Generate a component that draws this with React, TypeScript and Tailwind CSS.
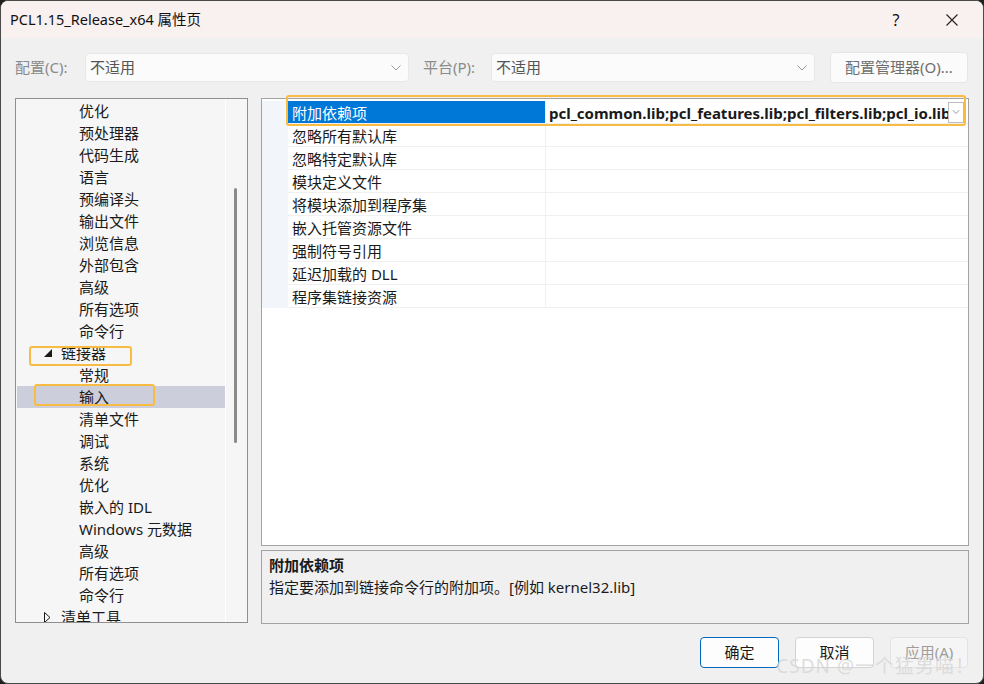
import React from "react";

// Visual Studio project property page: Linker > Input

const treeItems: { label: string; level: 1 | 2; expanded?: boolean; selected?: boolean }[] = [
  { label: "优化", level: 2 },
  { label: "预处理器", level: 2 },
  { label: "代码生成", level: 2 },
  { label: "语言", level: 2 },
  { label: "预编译头", level: 2 },
  { label: "输出文件", level: 2 },
  { label: "浏览信息", level: 2 },
  { label: "外部包含", level: 2 },
  { label: "高级", level: 2 },
  { label: "所有选项", level: 2 },
  { label: "命令行", level: 2 },
  { label: "链接器", level: 1, expanded: true },
  { label: "常规", level: 2 },
  { label: "输入", level: 2, selected: true },
  { label: "清单文件", level: 2 },
  { label: "调试", level: 2 },
  { label: "系统", level: 2 },
  { label: "优化", level: 2 },
  { label: "嵌入的 IDL", level: 2 },
  { label: "Windows 元数据", level: 2 },
  { label: "高级", level: 2 },
  { label: "所有选项", level: 2 },
  { label: "命令行", level: 2 },
  { label: "清单工具", level: 1, expanded: false },
];

const props = [
  "附加依赖项",
  "忽略所有默认库",
  "忽略特定默认库",
  "模块定义文件",
  "将模块添加到程序集",
  "嵌入托管资源文件",
  "强制符号引用",
  "延迟加载的 DLL",
  "程序集链接资源",
];

function Chevron({ className = "" }: { className?: string }) {
  return (
    <svg width="10" height="6" viewBox="0 0 10 6" className={className}>
      <path d="M0.5 0.5 L5 5 L9.5 0.5" fill="none" stroke="currentColor" strokeWidth="1" />
    </svg>
  );
}

function Combo({ value }: { value: string }) {
  return (
    <div className="w-[324px] h-[29px] shrink-0 flex items-center justify-between pl-[4px] pr-[7px] bg-[#fbfbfb] border border-[#e8e8e8] rounded-[4px] text-[#555555]">
      <span>{value}</span>
      <Chevron className="text-[#9a9a9a]" />
    </div>
  );
}

export default function App() {
  return (
    <div className="w-[984px] h-[684px] bg-[#1e1e1e] font-[family-name:'Segoe_UI','Noto_Sans','Noto_Sans_CJK_SC',sans-serif] text-[15px] text-[#1a1a1a]">
      <div className="h-full flex flex-col rounded-[8px] overflow-hidden bg-[#f0f0f0] border border-[#4a4a4a] relative">
        {/* Title bar */}
        <div className="h-[37px] shrink-0 bg-[#f9f0f0] flex items-center pl-[9px] text-[14.5px] text-[#111]">
          <span>PCL1.15_Release_x64 属性页</span>
          <div className="ml-auto flex items-center">
            <span className="w-[20px] text-center text-[16px] mr-[40px]">?</span>
            <svg width="12" height="12" viewBox="0 0 12 12" className="mr-[25px]">
              <path d="M0.5 0.5 L11.5 11.5 M11.5 0.5 L0.5 11.5" stroke="#222" strokeWidth="1.1" />
            </svg>
          </div>
        </div>

        <div className="flex-1 flex flex-col px-[14px]">
          {/* Configuration row */}
          <div className="mt-[14px] h-[31px] flex items-center">
            <span className="w-[70px] shrink-0 whitespace-nowrap text-[#8a8a8a]">配置(C):</span>
            <Combo value="不适用" />
            <span className="ml-[14px] w-[68px] shrink-0 whitespace-nowrap text-[#8a8a8a]">平台(P):</span>
            <Combo value="不适用" />
            <div className="ml-[15px] w-[138px] h-[31px] shrink-0 flex items-center justify-center bg-[#fbfbfb] border border-[#e6e6e6] rounded-[4px] text-[#6e6e6e] whitespace-nowrap">
              配置管理器(O)...
            </div>
          </div>

          {/* Main area */}
          <div className="mt-[15px] flex gap-[13px]">
            {/* Tree */}
            <div className="relative w-[233px] h-[525px] shrink-0 border border-[#8f8f8f] bg-[#f6f6f6] flex overflow-hidden">
              <div className="w-[209px] shrink-0 pt-[1px] pl-[1px]">
                {treeItems.map((it, i) => (
                  <div
                    key={i}
                    className={`h-[22px] flex items-center ${it.selected ? "bg-[#cccedb]" : ""} ${
                      it.level === 2 ? "pl-[62px]" : "pl-[27px]"
                    }`}
                  >
                    {it.level === 1 && (
                      <span className="w-[17px] flex items-center">
                        {it.expanded ? (
                          <svg width="8" height="8" viewBox="0 0 8 8">
                            <path d="M8 0 L8 8 L0 8 Z" fill="#1a1a1a" />
                          </svg>
                        ) : (
                          <svg width="7" height="11" viewBox="0 0 7 11">
                            <path d="M0.5 0.5 L6 5.5 L0.5 10.5 Z" fill="none" stroke="#1a1a1a" strokeWidth="1" />
                          </svg>
                        )}
                      </span>
                    )}
                    <span className="whitespace-nowrap">{it.label}</span>
                  </div>
                ))}
              </div>
              <div className="w-[1px] shrink-0 bg-white" />
              <div className="flex-1 pl-[8px] pt-[89px]">
                <div className="w-[3px] h-[255px] bg-[#8a8a8a] rounded-full" />
              </div>
              {/* annotation boxes */}
              <div className="absolute left-[13px] top-[247px] w-[103px] h-[20px] border-2 border-[#f9bc42] rounded-[3px]" />
              <div className="absolute left-[18px] top-[285px] w-[121px] h-[22px] border-2 border-[#f9bc42] rounded-[3px]" />
            </div>

            {/* Right column */}
            <div className="w-[708px] shrink-0 flex flex-col">
              <div className="relative h-[448px] border border-[#a3a3a3] bg-white">
                <div className="pt-[2px]">
                  {props.map((p, i) => (
                    <div key={p} className="h-[23px] flex overflow-hidden">
                      <div className="w-[26px] shrink-0 bg-[#f2f5fa]" />
                      <div className="flex-1 min-w-0 flex border-b border-[#f0f0f0]">
                        <div
                          className={`w-[258px] shrink-0 pl-[4px] pt-[2px] flex items-center border-r border-[#f0f0f0] whitespace-nowrap ${
                            i === 0 ? "bg-[#0078d7] text-white" : ""
                          }`}
                        >
                          {p}
                        </div>
                        <div className="flex-1 flex items-center min-w-0">
                          {i === 0 && (
                            <>
                              <span className="flex-1 min-w-0 pl-[3px] pt-[2px] font-bold whitespace-nowrap overflow-hidden">
                                pcl_common.lib;pcl_features.lib;pcl_filters.lib;pcl_io.lib;pcl_kdtree.lib
                              </span>
                              <div className="w-[16px] h-[21px] shrink-0 mr-[4px] border border-[#bdbdbd] bg-white flex items-center justify-center">
                                <Chevron className="text-[#777] scale-75" />
                              </div>
                            </>
                          )}
                        </div>
                      </div>
                    </div>
                  ))}
                </div>
                <div className="absolute left-[24px] top-[-4px] w-[680px] h-[31px] border-2 border-[#f9bc42] rounded-[3px]" />
              </div>
              <div className="mt-[4px] h-[74px] border border-[#a3a3a3] bg-[#f0f0f0] pl-[7px] pt-[3px]">
                <div className="h-[22px] font-bold">附加依赖项</div>
                <div className="h-[22px]">指定要添加到链接命令行的附加项。[例如 kernel32.lib]</div>
              </div>
            </div>
          </div>

          {/* Buttons */}
          <div className="mt-[13px] flex justify-end gap-[16px] pr-[1px]">
            <div className="w-[79px] h-[31px] flex items-center justify-center bg-[#fdfdfd] border border-[#0067c0] rounded-[4px]">
              确定
            </div>
            <div className="w-[79px] h-[31px] flex items-center justify-center bg-[#fdfdfd] border border-[#d3d3d3] rounded-[4px]">
              取消
            </div>
            <div className="w-[78px] h-[31px] flex items-center justify-center bg-[#f5f5f5] border border-[#e3e3e3] rounded-[4px] text-[#9d9d9d]">
              应用(A)
            </div>
          </div>
        </div>

        {/* watermark */}
        <div className="absolute right-[8px] bottom-[5px] text-[19px] leading-[24px] tracking-[1px] text-[#d6d6d6]/80 whitespace-nowrap">
          CSDN @一个猛男喵！
        </div>
      </div>
    </div>
  );
}
